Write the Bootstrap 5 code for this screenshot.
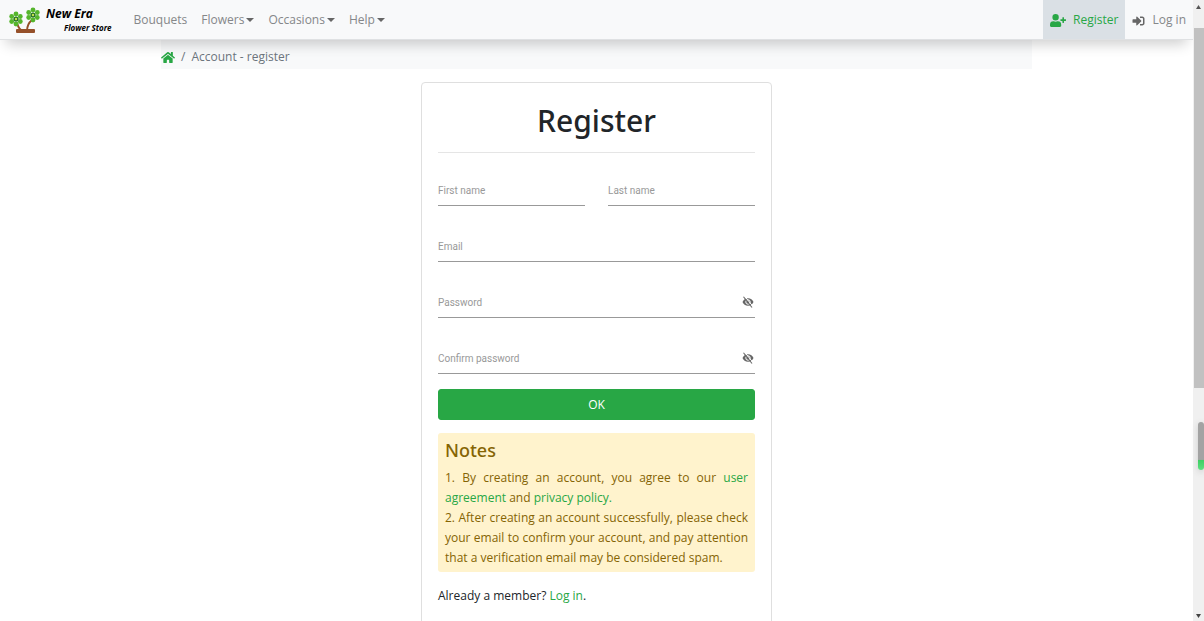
<!DOCTYPE html>
<html lang="en">
<head>
<meta charset="utf-8">
<meta name="viewport" content="width=device-width, initial-scale=1">
<title>Account - register</title>
<link href="https://cdn.jsdelivr.net/npm/bootstrap@5.3.0/dist/css/bootstrap.min.css" rel="stylesheet">
<style>
:root{--leaf:#28a745;--grey:#6c757d}
body{font-family:"Open Sans","Noto Sans",sans-serif;font-size:12px;line-height:20px;color:#212529;height:100vh;overflow:hidden;background:#fff}
a{color:var(--leaf);text-decoration:none}
a:hover{color:#1c7430}
.page-view{min-width:0;overflow:hidden}
.topbar{--bs-navbar-padding-y:0;--bs-navbar-nav-link-padding-x:7px;background:#f8f9fa;border-bottom:1px solid #dfe1e3;box-shadow:0 10px 14px -6px rgba(0,0,0,.2);height:40px;z-index:2}
.topbar .nav-link{color:#858789;padding-top:10px;padding-bottom:9px;line-height:20px;white-space:nowrap}
.topbar .nav-link.chosen{background:#dae0e5;color:var(--leaf)}
.topbar .dropdown-toggle::after{margin-left:2px;vertical-align:2px;border-top-width:4px;border-left-width:4px;border-right-width:4px;color:#666}
.brand{color:#000;padding:0 0 0 8px;margin-right:15px;font-style:italic;font-weight:700}
.brand:hover{color:#000}
.brand-top{font-size:12px;line-height:16px}
.brand-sub{font-size:8px;line-height:12px;padding-left:18px}
.wrap{max-width:871px}
.crumbs{background:#f8f9fa;padding:7px 0 2px;color:var(--grey)}
.crumb-bar{padding:0 6px}
.form-card{max-width:351px;border-color:#dfdfdf;border-radius:4px;margin-top:13px;min-height:600px}
.title,.notes h2{font-family:"Noto Sans",sans-serif;font-weight:500}
.title{font-size:30px;line-height:38px;padding:3px 0 12px;border-bottom:1px solid #e5e5e5}
.fields{gap:3px}
.field{height:53px;padding-top:25px}
.field input{width:100%;height:28px;border:0;border-bottom:1px solid #999;border-radius:0;padding:0 20px 0 0;background:none;outline:0;font-size:12px;box-shadow:none}
.field label{position:absolute;left:0;bottom:7px;font:10px/16px Roboto,sans-serif;color:#999;pointer-events:none}
.eye{position:absolute;right:0;bottom:8px;border:0;background:none;padding:0;width:14px;height:16px;display:flex;align-items:center}
.pair{gap:23px}
.ok{background:var(--leaf);border-color:var(--leaf);color:#fff;font-size:12px;line-height:20px;padding:5px;height:31px;border-radius:3px;margin-top:15px}
.ok:hover{background:#218838;color:#fff}
.notes{background:#fff3cd;color:#856404;border-radius:3px;margin:13px 0 14px;padding:4px 7px;text-align:justify}
.notes h2{font-size:18px;line-height:27px;margin:0 0 4px}
.scroller{width:11px;background:#f0f0f0;flex:none;position:relative}
.scroller .thumb{background:#c1c1c1;height:58%;width:10px;margin-left:1px}
.scroller .pill{position:absolute;right:0;top:68%;width:6px;height:48px;border-radius:3px;background:linear-gradient(#a3a3a3 78%,#3fcf65 80%,#5fe080);box-shadow:0 2px 6px #ccc}
.arrow{height:28px;padding-top:5px;text-align:center;line-height:0}
</style>
</head>
<body class="d-flex">
<svg class="d-none">
  <symbol id="eye-off" viewBox="0 0 24 24"><path d="M12 4.500C7 4.500 2.700 7.600 1 12c1.700 4.400 6 7.500 11 7.500s9.300-3.100 11-7.500c-1.700-4.400-6-7.500-11-7.500z" fill="#666"/><circle cx="12" cy="12" r="4.400" fill="none" stroke="#fff" stroke-width="2"/><path d="M5 0L22 21" stroke="#fff" stroke-width="2"/><path d="M3 1.500L20 23" stroke="#666" stroke-width="2.200"/></symbol>
  <symbol id="flower" viewBox="-7 -8 14 16"><g fill="#55b52c"><circle cy="-5" r="2.4"/><circle cx="4.3" cy="-2.5" r="2.4"/><circle cx="4.3" cy="2.5" r="2.4"/><circle cy="5" r="2.4"/><circle cx="-4.3" cy="2.5" r="2.4"/><circle cx="-4.3" cy="-2.5" r="2.4"/></g><circle r="2.6" fill="#267524"/><circle r="1.2" fill="#c6e34c"/></symbol>
</svg>
<div class="page-view flex-grow-1">
  <nav class="navbar navbar-expand topbar position-relative">
    <a class="navbar-brand brand d-flex align-items-center" href="#">
      <svg width="34" height="34" viewBox="0 0 34 34" aria-hidden="true"><path d="M9 20Q11 27 15 28M24 17Q19 21 19 28" stroke="#95502a" stroke-width="2" fill="none"/><rect x="8" y="26" width="19" height="4" rx="1" fill="#95502a"/><use href="#flower" x="1" y="8" width="14" height="16"/><use href="#flower" x="18" y="4" width="14" height="16"/></svg>
      <span class="d-flex flex-column ps-1"><span class="brand-top">New Era</span><span class="brand-sub">Flower Store</span></span>
    </a>
    <div class="navbar-nav me-auto">
      <a class="nav-link" href="#">Bouquets</a>
      <a class="nav-link dropdown-toggle" href="#">Flowers</a>
      <a class="nav-link dropdown-toggle" href="#">Occasions</a>
      <a class="nav-link dropdown-toggle" href="#">Help</a>
    </div>
    <div class="navbar-nav">
      <a class="nav-link chosen" href="#"><svg class="me-1" width="16" height="13" viewBox="0 0 640 512" fill="currentColor" aria-hidden="true"><path d="M624 208h-64v-64c0-9-7-16-16-16h-32c-9 0-16 7-16 16v64h-64c-9 0-16 7-16 16v32c0 9 7 16 16 16h64v64c0 9 7 16 16 16h32c9 0 16-7 16-16v-64h64c9 0 16-7 16-16v-32c0-9-7-16-16-16zM224 256a128 128 0 1 0 0-256 128 128 0 0 0 0 256zm90 32h-17a174 174 0 0 1-146 0h-17A134 134 0 0 0 0 422v42c0 27 22 48 48 48h352c27 0 48-21 48-48v-42a134 134 0 0 0-134-134z"/></svg> Register</a>
      <a class="nav-link" href="#"><svg class="me-1" width="13" height="12" viewBox="0 0 512 512" fill="#666" aria-hidden="true"><path d="M416 448h-84c-7 0-12-5-12-12v-40c0-7 5-12 12-12h84c18 0 32-14 32-32V160c0-18-14-32-32-32h-84c-7 0-12-5-12-12V76c0-7 5-12 12-12h84c53 0 96 43 96 96v192c0 53-43 96-96 96zm-47-209L201 71c-15-15-41-4-41 17v96H24c-13 0-24 11-24 24v96c0 13 11 24 24 24h136v96c0 21 26 32 41 17l168-168c9-9 9-25 0-34z"/></svg> Log in</a>
    </div>
  </nav>
  <main class="wrap mx-auto">
    <div class="crumbs d-flex align-items-center">
      <a href="#" aria-label="Home" class="d-flex"><svg width="14" height="13" viewBox="0 0 576 512" fill="currentColor"><path d="M280 148L96 300v164a16 16 0 0 0 16 16h112a16 16 0 0 0 16-16v-96a16 16 0 0 1 16-16h64a16 16 0 0 1 16 16v96a16 16 0 0 0 16 16h112a16 16 0 0 0 16-16V300L296 148a12 12 0 0 0-16 0zM572 251l-84-69V44a12 12 0 0 0-12-12h-56a12 12 0 0 0-12 12v72L318 43a48 48 0 0 0-61 0L4 251a12 12 0 0 0-2 17l26 31a12 12 0 0 0 17 2l235-194a12 12 0 0 1 16 0l235 194a12 12 0 0 0 17-2l26-31a12 12 0 0 0-2-17z"/></svg></a>
      <span class="crumb-bar">/</span><span>Account - register</span>
    </div>
    <section class="card form-card mx-auto">
      <form class="card-body">
        <h1 class="title text-center mb-0">Register</h1>
        <div class="fields d-flex flex-column">
          <div class="d-flex pair">
            <div class="field flex-fill position-relative"><input id="first" type="text"><label for="first">First name</label></div>
            <div class="field flex-fill position-relative"><input id="last" type="text"><label for="last">Last name</label></div>
          </div>
          <div class="field position-relative"><input id="email" type="email"><label for="email">Email</label></div>
          <div class="field position-relative"><input id="pass" type="password"><label for="pass">Password</label><button class="eye" type="button" aria-label="Show password"><svg width="14" height="12"><use href="#eye-off"/></svg></button></div>
          <div class="field position-relative"><input id="confirm" type="password"><label for="confirm">Confirm password</label><button class="eye" type="button" aria-label="Show password"><svg width="14" height="12"><use href="#eye-off"/></svg></button></div>
        </div>
        <button class="btn ok w-100" type="submit">OK</button>
        <div class="notes">
          <h2>Notes</h2>
          <div>1. By creating an account, you agree to our <a href="#">user agreement</a> and <a href="#">privacy policy.</a></div>
          <div>2. After creating an account successfully, please check your email to confirm your account, and pay attention that a verification email may be considered spam.</div>
        </div>
        <div>Already a member? <a href="#">Log in</a>.</div>
      </form>
    </section>
  </main>
</div>
<aside class="scroller d-flex flex-column" aria-hidden="true">
  <div class="arrow"><svg width="5" height="4"><path d="M0 4h5L2.500 0z" fill="#555"/></svg></div>
  <div class="thumb"></div>
  <div class="mt-auto text-center lh-1"><svg width="5" height="4"><path d="M0 0h5L2.500 4z" fill="#444"/></svg></div>
  <div class="pill"></div>
</aside>
<script src="https://cdn.jsdelivr.net/npm/bootstrap@5.3.0/dist/js/bootstrap.bundle.min.js"></script>
</body>
</html>
